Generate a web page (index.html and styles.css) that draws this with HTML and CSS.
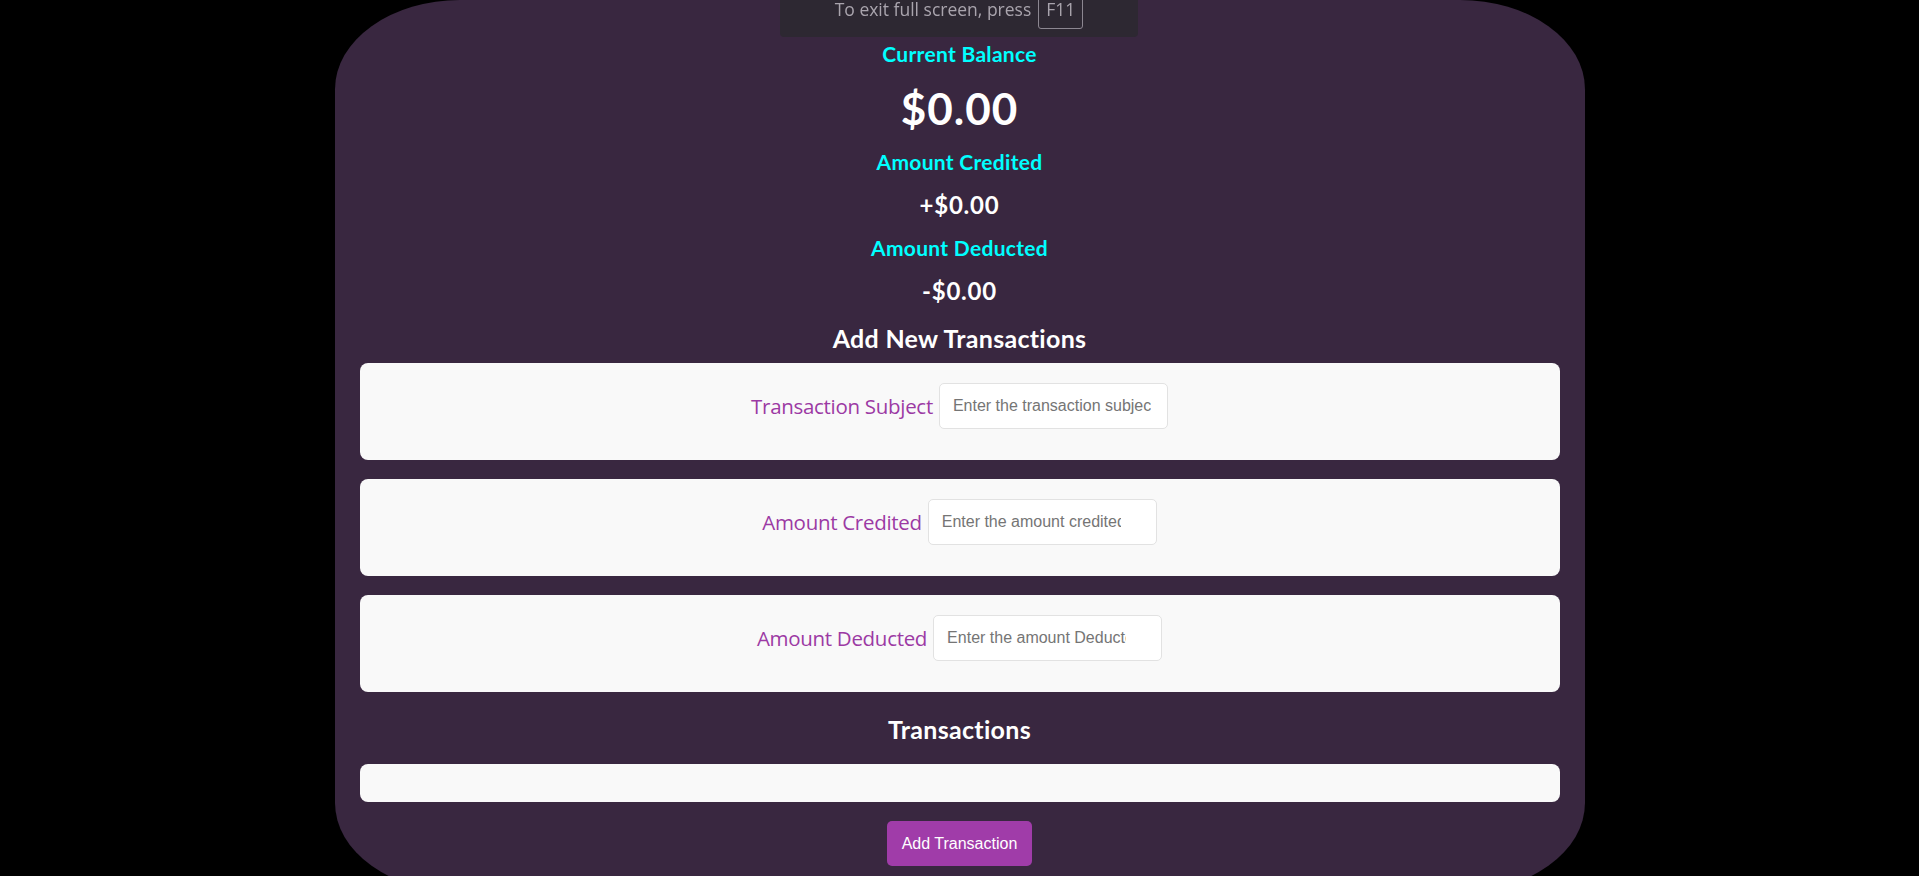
FILE: index.html
```html
<!DOCTYPE html>
<html lang="en">
<head>
<meta charset="utf-8">
<title>Expense Tracker</title>
<link rel="stylesheet" href="styles.css">
</head>
<body>
<div class="fs-bubble">
  <div class="fs-row">
    <span class="fs-text">To exit full screen, press</span>
    <span class="fs-key">F11</span>
  </div>
</div>
<main class="app">
  <div class="cyan-label">Current Balance</div>
  <div class="balance">$0.00</div>
  <div class="cyan-label after-balance">Amount Credited</div>
  <div class="sub-amount">+$0.00</div>
  <div class="cyan-label after-amount">Amount Deducted</div>
  <div class="sub-amount">-$0.00</div>
  <h2 class="section-title add-title">Add New Transactions</h2>
  <div class="field-card first">
    <label class="field-label" for="subject">Transaction Subject</label>
    <input class="field-input" id="subject" type="text" placeholder="Enter the transaction subject">
  </div>
  <div class="field-card">
    <label class="field-label" for="credit">Amount Credited</label>
    <input class="field-input number-input" id="credit" type="number" placeholder="Enter the amount credited">
  </div>
  <div class="field-card">
    <label class="field-label" for="debit">Amount Deducted</label>
    <input class="field-input number-input" id="debit" type="number" placeholder="Enter the amount Deducted">
  </div>
  <h2 class="section-title tx-title">Transactions</h2>
  <div class="tx-list"></div>
  <button class="add-btn" type="button">Add Transaction</button>
</main>
</body>
</html>
```
FILE: styles.css
```css
html, body {
  margin: 0;
  padding: 0;
  background: #000;
  overflow: hidden;
}

.app {
  width: 1250px;
  min-height: 892px;
  margin: 0 auto;
  box-sizing: border-box;
  padding: 42px 25px 0;
  background: #392740;
  border-radius: 10%;
  display: flex;
  flex-direction: column;
  align-items: stretch;
  text-align: center;
  font-family: Lato, "Open Sans", sans-serif;
  color: #fff;
}

.cyan-label {
  color: #00ffff;
  font-weight: 700;
  font-size: 21px;
  line-height: 24px;
  letter-spacing: 0.3px;
}

.after-balance { margin-top: 22px; }
.after-amount { margin-top: 19px; }

.balance {
  margin-top: 22px;
  font-size: 44px;
  line-height: 40px;
  font-weight: 700;
  letter-spacing: 1px;
}

.sub-amount {
  margin-top: 19px;
  font-size: 24px;
  line-height: 24px;
  font-weight: 700;
  letter-spacing: 0.8px;
}

.section-title {
  margin: 0;
  font-size: 25px;
  line-height: 28px;
  font-weight: 700;
  letter-spacing: 0.3px;
}

.add-title { margin-top: 21px; }
.tx-title { margin-top: 23px; }

.field-card {
  margin-top: 19px;
  height: 97px;
  box-sizing: border-box;
  padding-top: 20px;
  background: #f9f9f9;
  border-radius: 8px;
  display: flex;
  justify-content: center;
  align-items: flex-start;
  gap: 6px;
}

.field-card.first { margin-top: 11px; }

.field-label {
  font-family: "Open Sans", sans-serif;
  font-size: 20.5px;
  font-weight: 500;
  line-height: 46px;
  letter-spacing: -0.3px;
  color: #9c3aa4;
}

.field-input {
  width: 229px;
  height: 46px;
  box-sizing: border-box;
  padding: 0 16px 0 13px;
  border: 1px solid #e2e2e2;
  border-radius: 5px;
  background: #fff;
  font-family: "Liberation Sans", Arial, sans-serif;
  font-size: 16px;
  color: #333;
  outline: none;
}

.number-input {
  padding-right: 20px;
}

.field-input::placeholder {
  color: #757575;
}

.tx-list {
  margin-top: 21px;
  height: 38px;
  background: #f9f9f9;
  border-radius: 8px;
}

.add-btn {
  align-self: center;
  margin-top: 19px;
  height: 45px;
  padding: 0 15px;
  border: none;
  border-radius: 5px;
  background: #a03ca9;
  color: #fff;
  font-family: "Liberation Sans", Arial, sans-serif;
  font-size: 16px;
  cursor: pointer;
}

.fs-bubble {
  position: fixed;
  top: 0;
  left: 780px;
  width: 358px;
  height: 37px;
  background: #2d2832;
  border-radius: 0 0 4px 4px;
  overflow: hidden;
  display: flex;
  justify-content: center;
  font-family: "Open Sans", sans-serif;
}

.fs-row {
  display: flex;
  align-items: flex-start;
  gap: 7px;
}

.fs-text {
  font-size: 17.5px;
  line-height: 18px;
  color: #a9a4ad;
}

.fs-key {
  margin-top: -11px;
  padding: 5px 7px 5px;
  border: 1px solid #8c8791;
  border-radius: 3px;
  font-size: 17.5px;
  color: #a9a4ad;
  line-height: 28px;
}
```
